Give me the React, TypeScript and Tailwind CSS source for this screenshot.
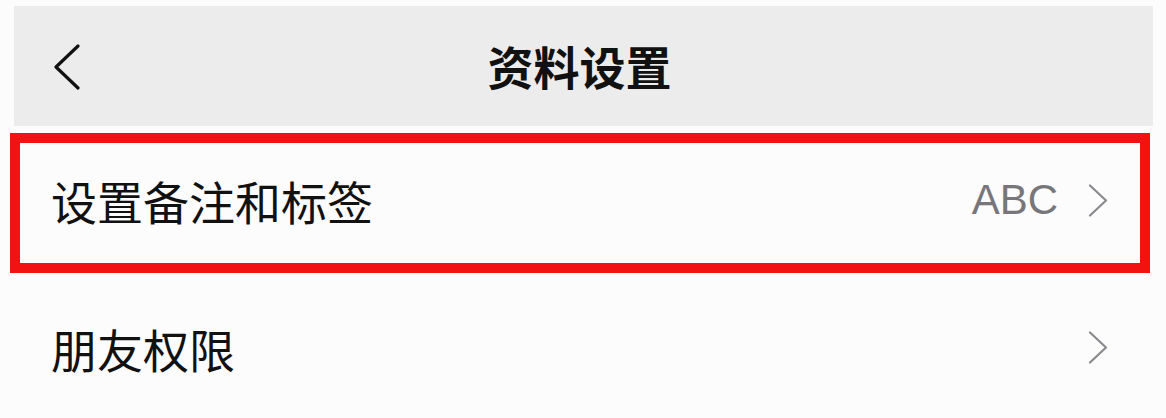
import React from 'react';

const ChevronRight = () => (
  <svg width="20" height="33" viewBox="0 0 20 33" fill="none" className="shrink-0">
    <polyline points="2,1.5 18,16.5 2,31.5" stroke="#8a8a8e" strokeWidth="2.2" strokeLinecap="round" strokeLinejoin="round" />
  </svg>
);

const BackArrow = () => (
  <svg width="27" height="46" viewBox="0 0 27 46" fill="none">
    <polyline points="25,2 3,23 25,44" stroke="#111111" strokeWidth="3.2" strokeLinecap="round" strokeLinejoin="round" />
  </svg>
);

const font = { fontFamily: '"Noto Sans CJK SC", "Noto Sans", sans-serif' };

const App = () => {
  return (
    <div className="w-[1166px] h-[418px] overflow-hidden bg-[#fcfcfd] flex flex-col" style={font}>
      {/* Header */}
      <div className="mt-[6px] ml-[14px] mr-[13px] h-[123px] bg-[#ececed] flex items-center relative">
        <div className="pl-[39px] pt-[2px] flex items-center">
          <BackArrow />
        </div>
        <div className="absolute inset-0 flex items-center justify-center">
          <span className="text-[46px] leading-none font-bold text-[#111111] -ml-[8px] -mt-[2px]">资料设置</span>
        </div>
      </div>

      {/* Highlighted row */}
      <div className="mt-[7px] ml-[10px] mr-[16px] h-[143px] border-[10px] border-[#f31212] flex items-center pl-[31px] pr-[32px]">
        <span className="flex-1 text-[46px] leading-none text-[#111111] -mt-[6px]">设置备注和标签</span>
        <span className="text-[42px] leading-none text-[#77777b] mr-[30px] -mt-[6px]" style={{ fontFamily: '"Liberation Sans", Arial, sans-serif' }}>ABC</span>
        <div className="-mt-[6px]"><ChevronRight /></div>
      </div>

      {/* Friend permissions */}
      <div className="ml-[10px] mr-[16px] h-[148px] border-x-[10px] border-transparent flex items-center pl-[31px] pr-[32px]">
        <span className="flex-1 text-[46px] leading-none text-[#111111] mt-[4px]">朋友权限</span>
        <div className="mt-[4px]"><ChevronRight /></div>
      </div>
    </div>
  );
};

export default App;
